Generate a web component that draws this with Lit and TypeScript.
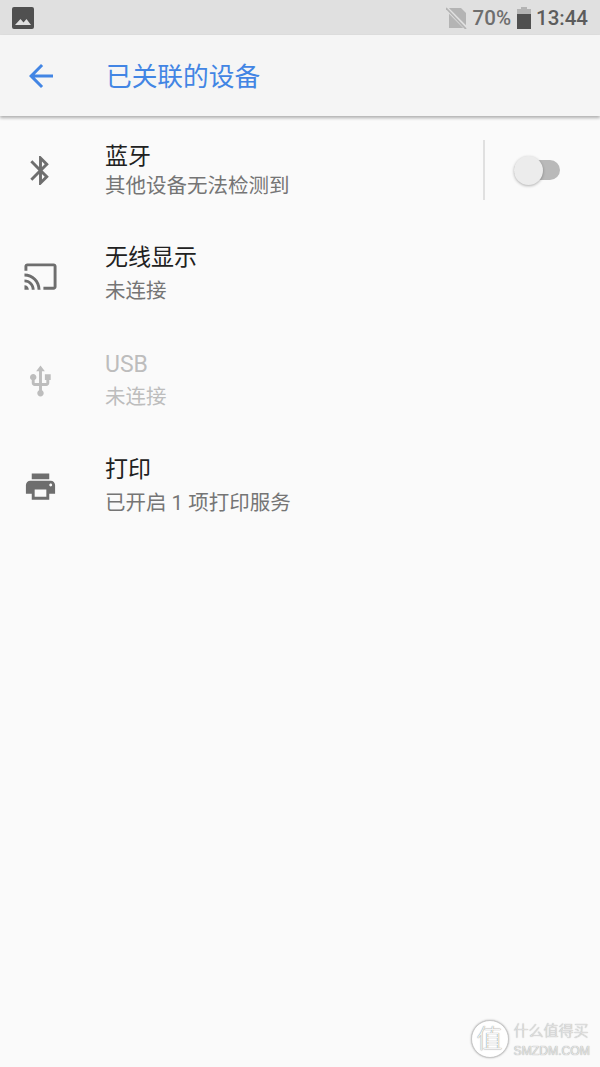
import { html, css, LitElement, svg } from 'lit';
import { customElement } from 'lit/decorators.js';

const icons = {
  bluetooth: svg`<path d="M17.71 7.71 12 2h-1v7.59L6.41 5 5 6.41 10.59 12 5 17.59 6.41 19 11 14.41V22h1l5.71-5.71-4.3-4.29 4.3-4.29zM13 5.83l1.88 1.88L13 9.59V5.83zm1.88 10.46L13 18.17v-3.76l1.88 1.88z"/>`,
  cast: svg`<path d="M21 3H3c-1.1 0-2 .9-2 2v3h2V5h18v14h-7v2h7c1.1 0 2-.9 2-2V5c0-1.1-.9-2-2-2zM1 18v3h3c0-1.66-1.34-3-3-3zm0-4v2c2.76 0 5 2.24 5 5h2c0-3.87-3.13-7-7-7zm0-4v2c4.97 0 9 4.03 9 9h2c0-6.08-4.93-11-11-11z"/>`,
  usb: svg`<path d="M15 7v4h1v2h-3V5h2l-3-4-3 4h2v8H8v-2.07c.7-.37 1.2-1.08 1.2-1.93 0-1.21-.99-2.2-2.2-2.2-1.21 0-2.2.99-2.2 2.2 0 .85.5 1.56 1.2 1.93V13c0 1.11.89 2 2 2h3v3.05c-.71.37-1.2 1.1-1.2 1.95 0 1.22.99 2.2 2.2 2.2 1.21 0 2.2-.98 2.2-2.2 0-.85-.49-1.58-1.2-1.95V15h3c1.11 0 2-.89 2-2v-2h1V7h-4z"/>`,
  print: svg`<path d="M19 8H5c-1.66 0-3 1.34-3 3v6h4v4h12v-4h4v-6c0-1.66-1.34-3-3-3zm-3 11H8v-5h8v5zm3-7c-.55 0-1-.45-1-1s.45-1 1-1 1 .45 1 1-.45 1-1 1zm-1-9H6v4h12V3z"/>`,
};

const rows = [
  { icon: icons.bluetooth, title: '蓝牙', sub: '其他设备无法检测到', cls: 'first', toggle: true },
  { icon: icons.cast, title: '无线显示', sub: '未连接', cls: 'cast' },
  { icon: icons.usb, title: 'USB', sub: '未连接', cls: 'off' },
  { icon: icons.print, title: '打印', sub: '已开启 1 项打印服务', cls: '' },
];

@customElement('app-root')
export class AppRoot extends LitElement {
  static styles = css`
    :host {
      display: block;
      width: 600px;
      height: 1067px;
      background: #fafafa;
      position: relative;
      overflow: hidden;
      font-family: Roboto, 'Noto Sans CJK SC', sans-serif;
    }
    .status {
      height: 35px;
      background: #e0e0e0;
      display: flex;
      align-items: center;
      padding: 0 12px;
      color: #5c5c5c;
      font-size: 20.5px;
      font-weight: 500;
    }
    .pct {
      color: #6e6e6e;
    }
    .pic {
      width: 22px;
      height: 22px;
      fill: #505050;
      margin-right: auto;
    }
    .nosim {
      width: 22px;
      height: 22px;
      margin-right: 5px;
    }
    .batt {
      width: 14px;
      height: 22px;
      margin: 0 5px 0 6px;
    }
    .bar {
      height: 81px;
      background: #f5f5f5;
      box-shadow: 0 2px 3px rgba(0, 0, 0, 0.3);
      display: flex;
      align-items: center;
      color: #4285e4;
      position: relative;
    }
    .back {
      width: 36px;
      height: 36px;
      fill: #4285e4;
      margin: 0 47px 0 23px;
    }
    .bar span {
      font-size: 25.7px;
      padding-bottom: 2px;
    }
    .list {
      padding-top: 23px;
    }
    .row {
      display: flex;
      height: 105.5px;
    }
    .row.first {
      height: 100.5px;
    }
    .row.cast {
      height: 106.5px;
    }
    .row .ic {
      width: 105px;
      display: flex;
      justify-content: center;
      padding-right: 24px;
      box-sizing: border-box;
      padding-top: 17.5px;
    }
    .row.first .ic {
      padding-top: 13.5px;
    }
    .row.cast .ic {
      padding-top: 19.5px;
    }
    .row svg.glyph {
      width: 35px;
      height: 35px;
      fill: #6e6e6e;
    }
    .row .txt {
      flex: 1;
      display: flex;
      flex-direction: column;
    }
    .title {
      font-size: 23px;
      line-height: 34px;
      margin: 1px 0 -1px;
      color: #212121;
    }
    .sub {
      font-size: 20.5px;
      line-height: 34px;
      color: #757575;
    }
    .first .sub {
      line-height: 27px;
    }
    .off .title {
      margin: 2px 0 -2px;
    }
    .off .title,
    .off .sub {
      color: #bdbdbd;
    }
    .off svg.glyph {
      fill: #bdbdbd;
    }
    .sw {
      display: flex;
      align-items: center;
      height: 60px;
      margin: 1px 40px 0 0;
      border-left: 2px solid #e0e0e0;
      padding-left: 29px;
    }
    .track {
      width: 46px;
      height: 20px;
      border-radius: 10px;
      background: #b9b9b9;
      position: relative;
    }
    .thumb {
      position: absolute;
      left: 0;
      top: -4px;
      width: 29px;
      height: 29px;
      border-radius: 50%;
      background: #ececec;
      box-shadow: 0 1px 3px rgba(0, 0, 0, 0.3);
    }
    .mark {
      position: absolute;
      right: 10px;
      bottom: 9px;
      display: flex;
      align-items: center;
      gap: 5px;
      color: #e4e4e4;
      text-shadow: 0 0 1px #8a8a8a;
    }
    .seal {
      width: 36px;
      height: 36px;
      border: 1.5px solid #c8c8c8;
      border-radius: 50%;
      display: flex;
      align-items: center;
      justify-content: center;
      font-size: 26px;
      font-weight: 300;
      line-height: 1;
      background: #fff;
      box-shadow: 0 0 2px #aaa;
      color: #f4f4f4;
      text-shadow: 0 0 1px #666;
    }
    .words {
      display: flex;
      flex-direction: column;
      gap: 4px;
      margin-top: 3px;
    }
    .cn {
      font-size: 15px;
      line-height: 18px;
      font-weight: 300;
    }
    .en {
      font-size: 12.2px;
      line-height: 14px;
      font-family: 'Liberation Sans', sans-serif;
    }
  `;

  render() {
    return html`
      <div class="status">
        <svg class="pic" viewBox="0 0 22 22">
          <path fill-rule="evenodd" d="M2 0h18a2 2 0 0 1 2 2v18a2 2 0 0 1-2 2H2a2 2 0 0 1-2-2V2a2 2 0 0 1 2-2zM3 18h16l-4.500-6-3 3.500L8.500 12z"/>
        </svg>
        <svg class="nosim" viewBox="0 0 22 22">
          <path fill="#b4b4b4" d="M3 1h12l5 5v15H3z"/>
          <path stroke="#e0e0e0" stroke-width="4" d="M1 2l20 20"/>
          <path stroke="#b4b4b4" stroke-width="1.800" d="M0 1l20 21"/>
        </svg>
        <span class="pct">70%</span>
        <svg class="batt" viewBox="0 0 14 22">
          <path fill="#b4b4b4" d="M4 0h6v2h4v6H0V2h4z"/>
          <path fill="#505050" d="M0 7h14v15H0z"/>
        </svg>
        <span>13:44</span>
      </div>
      <div class="bar">
        <svg class="back" viewBox="0 0 24 24">
          <path d="M20 11H7.830l5.590-5.590L12 4l-8 8 8 8 1.410-1.410L7.830 13H20v-2z"/>
        </svg>
        <span>已关联的设备</span>
      </div>
      <div class="list">
        ${rows.map(
          (r) => html`
            <div class="row ${r.cls}">
              <div class="ic">
                <svg class="glyph" viewBox="0 0 24 24">${r.icon}</svg>
              </div>
              <div class="txt">
                <div class="title">${r.title}</div>
                <div class="sub">${r.sub}</div>
              </div>
              ${r.toggle
                ? html`<div class="sw">
                    <div class="track"><div class="thumb"></div></div>
                  </div>`
                : ''}
            </div>
          `
        )}
      </div>
      <div class="mark">
        <div class="seal">值</div>
        <div class="words">
          <div class="cn">什么值得买</div>
          <div class="en">SMZDM.COM</div>
        </div>
      </div>
    `;
  }
}
